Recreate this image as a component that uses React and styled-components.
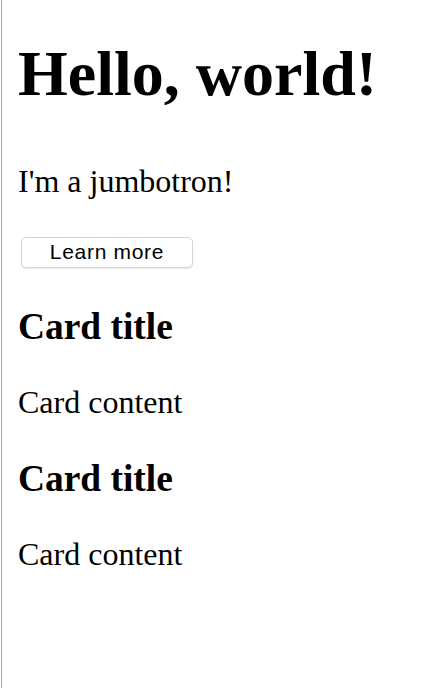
import React from "react";
import styled, { createGlobalStyle } from "styled-components";

const Global = createGlobalStyle`
  html, body { margin: 0; padding: 0; background: #fff; }
  body { font-family: "Liberation Serif", "Times New Roman", serif; color: #000; }
`;

const Page = styled.div`
  margin-left: 1px;
  min-height: 688px;
  box-sizing: border-box;
  border-left: 1px solid #a8a8a8;
  padding: 38px 16px 0 16px;
  display: flex;
  flex-direction: column;
`;

const Jumbotron = styled.section`
  display: flex;
  flex-direction: column;
  align-items: flex-start;
`;

const Title = styled.h1`
  margin: 0;
  font-size: 64px;
  line-height: 72px;
  font-weight: bold;
`;

const Lead = styled.p`
  margin: 53px 0 0;
  font-size: 32px;
  line-height: 36px;
`;

const Button = styled.button`
  margin: 38px 0 0 3px;
  width: 172px;
  height: 31px;
  box-sizing: border-box;
  background: #fff;
  border: 1px solid #d4d4d4;
  border-radius: 5px;
  box-shadow: 0 1px 1px rgba(0, 0, 0, 0.08);
  font-family: "Liberation Sans", Arial, sans-serif;
  font-size: 21px;
  letter-spacing: 0.7px;
  color: #000;
  padding: 0 0 1px;
`;

const Cards = styled.div`
  display: flex;
  flex-direction: column;
  gap: 38px;
  margin-top: 38px;
`;

const Card = styled.article`
  display: flex;
  flex-direction: column;
`;

const CardTitle = styled.h3`
  margin: 0 0 36px;
  font-size: 37.44px;
  line-height: 42px;
  font-weight: bold;
`;

const CardText = styled.p`
  margin: 0;
  font-size: 32px;
  line-height: 36px;
`;

export default function App() {
  return (
    <>
      <Global />
      <Page>
        <Jumbotron>
          <Title>Hello, world!</Title>
          <Lead>I'm a jumbotron!</Lead>
          <Button>Learn more</Button>
        </Jumbotron>
        <Cards>
          {[0, 1].map((i) => (
            <Card key={i}>
              <CardTitle>Card title</CardTitle>
              <CardText>Card content</CardText>
            </Card>
          ))}
        </Cards>
      </Page>
    </>
  );
}
